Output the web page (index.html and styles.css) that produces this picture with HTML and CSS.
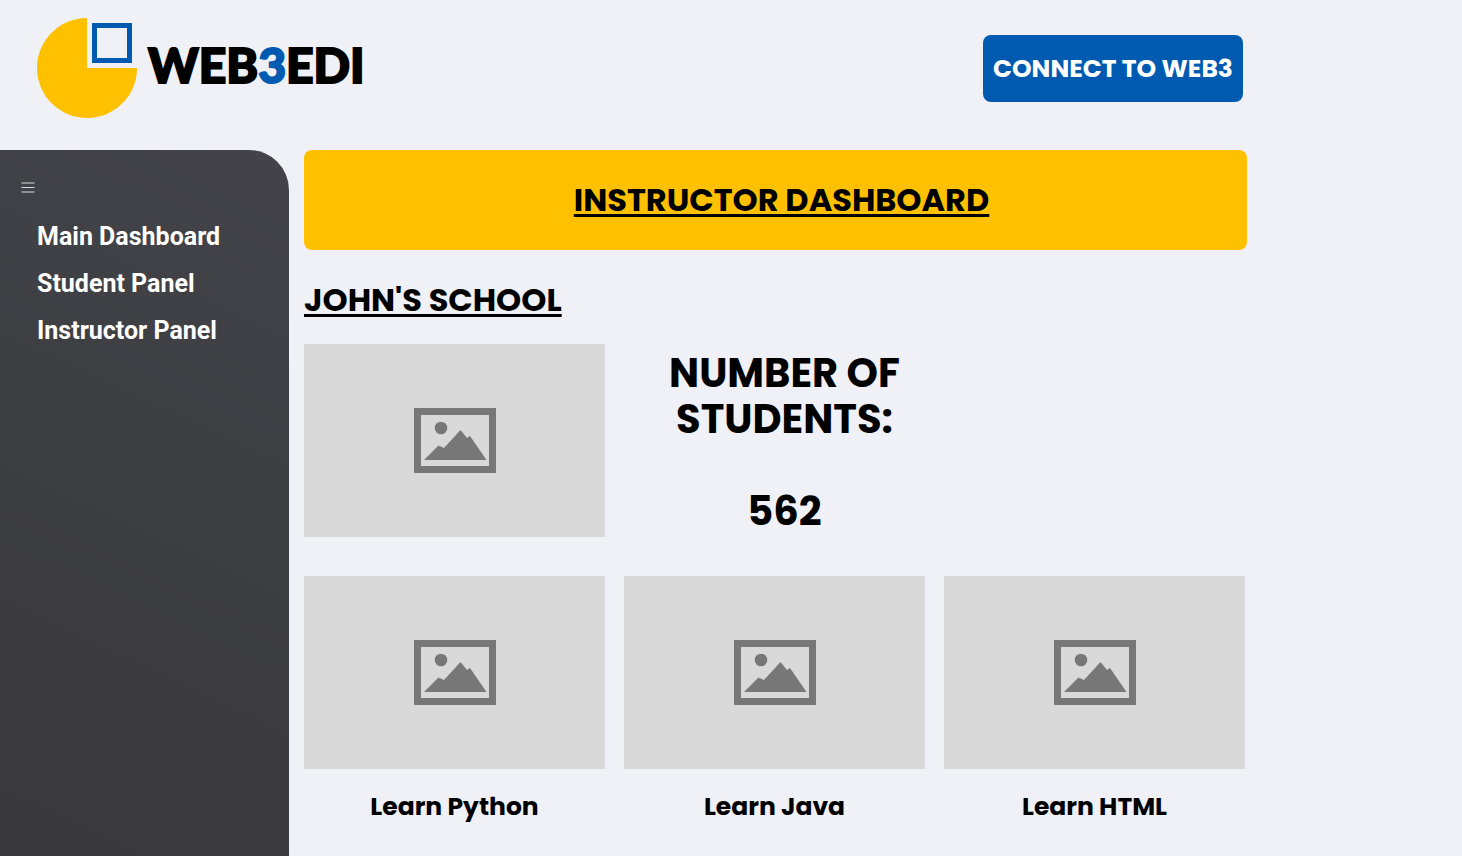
FILE: index.html
```html
<!DOCTYPE html>
<html lang="en">
<head>
<meta charset="utf-8">
<meta name="viewport" content="width=device-width, initial-scale=1">
<title>Web3Edi - Instructor Dashboard</title>
<link rel="stylesheet" href="styles.css">
</head>
<body>
<svg class="defs" aria-hidden="true">
  <symbol id="picture" viewBox="0 0 82 65">
    <path fill-rule="evenodd" d="M0 0H82V65H0ZM7 7V58H75V7Z"/>
    <circle cx="27" cy="20" r="6.3"/>
    <path d="M10 52 24.500 37.500 30 40 46.500 22 53 30 56 28 72.500 52Z"/>
  </symbol>
</svg>
<header class="header">
  <a class="logo" href="#">
    <svg class="logo-mark" viewBox="0 0 100 100" aria-hidden="true">
      <path fill="#ffc000" d="M50 50V0A50 50 0 1 0 100 50Z"/>
      <rect x="57.500" y="7.500" width="35" height="35" fill="none" stroke="#005bb0" stroke-width="5"/>
    </svg>
    <span class="logo-text">WEB<span class="logo-accent">3</span>EDI</span>
  </a>
  <button class="connect" type="button">CONNECT TO WEB3</button>
</header>
<div class="page">
  <aside class="sidebar">
    <button class="menu" type="button" aria-label="Toggle menu">
      <svg class="menu-icon" viewBox="0 0 14 12" aria-hidden="true"><path d="M.5 1.500H13.500M.5 6H13.500M.5 10.500H13.500"/></svg>
    </button>
    <nav class="nav">
      <a href="#">Main Dashboard</a>
      <a href="#">Student Panel</a>
      <a href="#">Instructor Panel</a>
    </nav>
  </aside>
  <main class="main">
    <div class="banner"><h1 class="title">INSTRUCTOR DASHBOARD</h1></div>
    <h2 class="title school">JOHN'S SCHOOL</h2>
    <section class="cards">
      <div class="thumb"><svg class="picture"><use href="#picture"/></svg></div>
      <div class="stat"><p>NUMBER OF STUDENTS:</p><p>562</p></div>
    </section>
    <section class="cards courses">
      <article><div class="thumb"><svg class="picture"><use href="#picture"/></svg></div><h3 class="course">Learn Python</h3></article>
      <article><div class="thumb"><svg class="picture"><use href="#picture"/></svg></div><h3 class="course">Learn Java</h3></article>
      <article><div class="thumb"><svg class="picture"><use href="#picture"/></svg></div><h3 class="course">Learn HTML</h3></article>
    </section>
  </main>
</div>
</body>
</html>
```
FILE: styles.css
```css
* { box-sizing: border-box; }
body {
  display: flex;
  flex-direction: column;
  min-height: 100vh;
  margin: 0;
  background: #f0f1f6;
  color: #000;
  font-family: Poppins, Inter, sans-serif;
}
h1, h2, h3, p { margin: 0; }
a { color: inherit; text-decoration: none; }
.defs { display: none; }

.header {
  display: flex;
  align-items: center;
  justify-content: space-between;
  max-width: 1243px;
  padding: 18px 0 32px 37px;
}
.logo { display: flex; align-items: center; gap: 11px; }
.logo-mark { width: 100px; height: 100px; }
.logo-text {
  padding-bottom: 6px;
  font: 900 48px/58px Lato, sans-serif;
  -webkit-text-stroke: 2px;
}
.logo-accent { color: #005bb0; }
.connect {
  padding: 18px 10px;
  border: 0;
  border-radius: 8px;
  background: #005bb0;
  color: #fff;
  font: 700 25px/31px Poppins, Inter, sans-serif;
  white-space: nowrap;
}

.page { display: flex; flex: 1; }
.sidebar {
  flex: 0 0 289px;
  padding: 30px 20px;
  border-radius: 0 40px 0 0;
  background: linear-gradient(25deg, #39383c, #3e3f43 60%, #434349);
  color: #fff;
}
.menu {
  display: block;
  padding: 1px;
  border: 0;
  background: none;
}
.menu-icon {
  display: block;
  width: 14px;
  height: 13px;
  fill: none;
  stroke: #ddd;
}
.nav {
  display: flex;
  flex-direction: column;
  gap: 17px;
  padding: 27px 17px;
  font: 700 25px/30px Roboto, sans-serif;
}

.main { flex: 1; max-width: 973px; padding: 0 15px 32px; }
.banner {
  padding: 30px 0 30px 12px;
  border-radius: 8px;
  background: #ffc000;
  text-align: center;
}
.title {
  font-size: 32px;
  line-height: 40px;
  font-weight: 700;
  text-decoration: underline 3px;
  text-underline-offset: 3px;
}
.school { padding: 30px 0 24px; }
.cards {
  display: grid;
  grid-template-columns: repeat(3, 1fr);
  gap: 19px;
  padding-right: 2px;
}
.courses { padding-top: 39px; }
.thumb {
  display: flex;
  align-items: center;
  justify-content: center;
  height: 193px;
  background: #d9d9d9;
}
.picture { width: 82px; height: 65px; fill: #777; }
.stat {
  display: grid;
  gap: 46px;
  align-content: start;
  padding: 6px 0 0 20px;
  font-size: 40px;
  line-height: 46px;
  font-weight: 700;
  text-align: center;
}
.course {
  padding-top: 23px;
  font-size: 25px;
  line-height: 30px;
  font-weight: 700;
  text-align: center;
}
```
